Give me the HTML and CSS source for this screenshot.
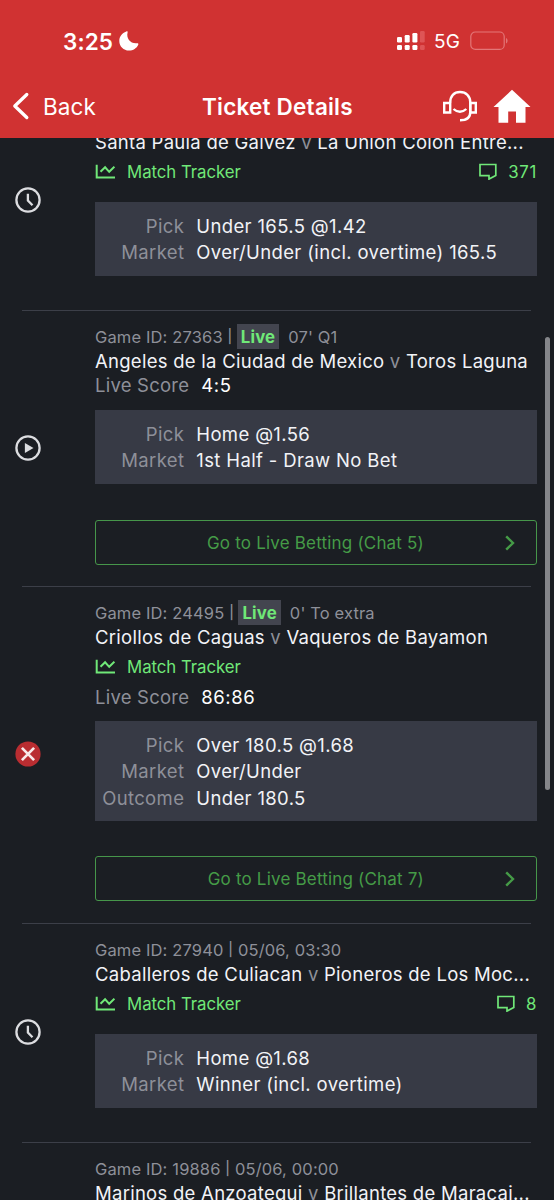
FILE: index.html
```html
<!DOCTYPE html>
<html lang="en">
<head>
<meta charset="utf-8">
<title>Ticket Details</title>
<link rel="stylesheet" href="styles.css">
</head>
<body>
<svg width="0" height="0" class="defs">
  <symbol id="clock" viewBox="0 0 26 26"><circle cx="13" cy="13" r="11.6" fill="none" stroke="#dcdde0" stroke-width="2.3"/><path d="M12.9 6.700v6.800l4.600 4.800" fill="none" stroke="#dcdde0" stroke-width="2.3"/></symbol>
  <symbol id="play" viewBox="0 0 26 26"><circle cx="13" cy="13" r="11.6" fill="none" stroke="#dcdde0" stroke-width="2.3"/><path d="M9.9 7.9v10.200l8.600-5.100z" fill="#dcdde0"/></symbol>
  <symbol id="lost" viewBox="0 0 26 26"><circle cx="13" cy="13" r="12.6" fill="#b92d31"/><path d="M6.900 6.900l12.200 12.200M19.100 6.900L6.900 19.100" fill="none" stroke="#f8eaea" stroke-width="2.7"/></symbol>
  <symbol id="chart" viewBox="0 0 20 16"><path d="M1.700 .8v12.700h18.300M5.500 7.800L10.100 3.300l4.100 4.500L19.400 2.700" fill="none" stroke="currentColor" stroke-width="2"/></symbol>
  <symbol id="chat" viewBox="0 0 18 17"><path d="M1 1.500h15.800v11l-6.800 3.600v-3.400H1z" fill="none" stroke="currentColor" stroke-width="1.7"/></symbol>
  <symbol id="next" viewBox="0 0 10 16"><path d="M1.2 1.3L8 8l-6.800 6.700" fill="none" stroke="currentColor" stroke-width="2.4"/></symbol>
</svg>
<header class="header">
  <div class="statusbar">
    <span class="time">3:25</span>
    <svg class="moon" width="20" height="20" viewBox="0 0 20 20"><path d="M7.300 .5C8.200 0 8.900.5 8.600 1.500 7 7.500 11.500 13 18.200 12.200c1-.1 1.500.5 1 1.500C17.700 17.200 14.200 19.500 10 19.500 4.600 19.500.3 15.300.3 9.900.3 5.600 3 2 7.300.5z" fill="#fff"/></svg>
    <svg class="signal" width="28" height="20" viewBox="0 0 28 20"><g fill="#fff"><rect x="0" y="6" width="5" height="5.5" rx="1.2"/><rect x="7.7" y="4" width="5" height="7.5" rx="1.2"/><rect x="15.4" y="2" width="5" height="9.5" rx="1.2"/><rect x="0" y="14" width="5" height="5" rx="1.2"/><rect x="7.7" y="14" width="5" height="5" rx="1.2"/><rect x="15.4" y="14" width="5" height="5" rx="1.2"/></g><g fill="#de5556"><rect x="23" y="0" width="4.7" height="11.5" rx="1.2"/><rect x="23" y="14" width="4.7" height="5" rx="1.2"/></g></svg>
    <span class="net">5G</span>
    <svg class="battery" width="40" height="20" viewBox="0 0 40 20"><rect x=".8" y="1" width="33.4" height="17.4" rx="4.5" fill="none" stroke="#e37677" stroke-width="1.2"/><path d="M36.200 7v5.500c1.700-.8 1.700-4.700 0-5.500z" fill="#e58485"/></svg>
  </div>
  <nav class="navbar">
    <svg class="back-icon" width="18" height="28" viewBox="0 0 18 28"><path d="M14.8 2.500L2.800 14l12 11.500" fill="none" stroke="#fff" stroke-width="3.3" stroke-linecap="round" stroke-linejoin="round"/></svg>
    <span class="back">Back</span>
    <h1 class="heading">Ticket Details</h1>
    <svg class="support" width="36" height="34" viewBox="0 0 36 34"><g fill="none" stroke="#fff" stroke-width="2.4"><path d="M8.200 13.500C8.200 7 12 3 18 3s10.300 4 10.300 10.500v9.500c0 5.500-3 8.300-10.300 8.300"/><path d="M2.200 14h6v9.500h-6zM28.300 14h5.500v9.500h-5.500z"/><path d="M11.500 20c3.800 3.600 9 3.600 12.800 0"/></g></svg>
    <svg class="home" width="38" height="34" viewBox="0 0 38 34"><path d="M19 .8L37.500 18H32.500V33.700H23V22.500H15.200V33.700H5.500V18H.5z" fill="#fff"/></svg>
  </nav>
</header>
<main class="list">
  <article class="bet bet-first">
    <svg class="state"><use href="#clock"/></svg>
    <div class="content">
      <h2 class="teams">Santa Paula de Galvez <i>v</i> La Union Colon Entre...</h2>
      <div class="tracker"><svg class="chart"><use href="#chart"/></svg><span class="label">Match Tracker</span><svg class="chat"><use href="#chat"/></svg><span class="count">371</span></div>
      <dl class="box"><dt>Pick</dt><dd>Under 165.5 @1.42</dd><dt>Market</dt><dd>Over/Under (incl. overtime) 165.5</dd></dl>
    </div>
  </article>
  <article class="bet">
    <svg class="state"><use href="#play"/></svg>
    <div class="content">
      <div class="meta">Game ID: 27363 <span class="bar">|</span><b class="live">Live</b><span>07' Q1</span></div>
      <h2 class="teams">Angeles de la Ciudad de Mexico <i>v</i> Toros Laguna</h2>
      <div class="score">Live Score<b>4:5</b></div>
      <dl class="box box-low"><dt>Pick</dt><dd>Home @1.56</dd><dt>Market</dt><dd>1st Half - Draw No Bet</dd></dl>
      <a class="go"><span>Go to Live Betting (Chat 5)</span><svg class="next"><use href="#next"/></svg></a>
    </div>
  </article>
  <article class="bet bet-long">
    <svg class="state"><use href="#lost"/></svg>
    <div class="content">
      <div class="meta">Game ID: 24495 <span class="bar">|</span><b class="live">Live</b><span>0' To extra</span></div>
      <h2 class="teams">Criollos de Caguas <i>v</i> Vaqueros de Bayamon</h2>
      <div class="tracker"><svg class="chart"><use href="#chart"/></svg><span class="label">Match Tracker</span></div>
      <div class="score">Live Score<b>86:86</b></div>
      <dl class="box"><dt>Pick</dt><dd>Over 180.5 @1.68</dd><dt>Market</dt><dd>Over/Under</dd><dt>Outcome</dt><dd>Under 180.5</dd></dl>
      <a class="go"><span>Go to Live Betting (Chat 7)</span><svg class="next"><use href="#next"/></svg></a>
    </div>
  </article>
  <article class="bet bet-plain">
    <svg class="state"><use href="#clock"/></svg>
    <div class="content">
      <div class="meta">Game ID: 27940 <span class="bar">|</span> 05/06, 03:30</div>
      <h2 class="teams">Caballeros de Culiacan <i>v</i> Pioneros de Los Moc...</h2>
      <div class="tracker"><svg class="chart"><use href="#chart"/></svg><span class="label">Match Tracker</span><svg class="chat"><use href="#chat"/></svg><span class="count">8</span></div>
      <dl class="box"><dt>Pick</dt><dd>Home @1.68</dd><dt>Market</dt><dd>Winner (incl. overtime)</dd></dl>
    </div>
  </article>
  <article class="bet bet-last">
    <div class="content">
      <div class="meta">Game ID: 19886 <span class="bar">|</span> 05/06, 00:00</div>
      <h2 class="teams">Marinos de Anzoategui <i>v</i> Brillantes de Maracai...</h2>
    </div>
  </article>
</main>
<div class="scrollbar"></div>
</body>
</html>
```
FILE: styles.css
```css
* { box-sizing: border-box; }
body { margin: 0; height: 1200px; overflow: hidden; background: #1b1e23; color: #f2f3f7; font-family: Inter, sans-serif; font-size: 18px; position: relative; }
.defs { position: absolute; }
svg { display: block; flex: none; }
.header { height: 138px; background: #d03232; color: #fff; padding-top: 25px; }
.statusbar { height: 32px; display: flex; align-items: center; padding-left: 63px; }
.time { width: 56px; font-size: 22.5px; font-weight: 600; letter-spacing: .1px; }
.signal { margin: 0 9px 0 258px; }
.net { width: 36px; font-size: 19px; letter-spacing: .2px; }
.navbar { height: 60px; margin-top: 19px; display: flex; align-items: center; padding-left: 12px; }
.back { width: 159px; margin-left: 13px; font-size: 22.5px; letter-spacing: .1px; }
.heading { width: 240px; margin: 0; font-size: 22.5px; font-weight: 600; letter-spacing: .22px; white-space: nowrap; }
.home { margin-left: 15px; }
.list { height: 1062px; overflow: hidden; }
.bet { display: flex; align-items: center; height: 276px; padding-left: 15px; position: relative; }
.bet::before { content: ""; position: absolute; left: 22px; right: 23px; top: 0; height: 1px; background: #3c3f48; }
.bet-first, .bet-plain { height: 219px; }
.bet-first { margin-top: -47px; }
.bet-first .content { padding-top: 39px; }
.bet-long { height: 337px; }
.bet-last { padding-left: 41px; }
.state { width: 26px; height: 26px; margin-top: -1px; }
.content { width: 442px; margin-left: 54px; align-self: flex-start; padding-top: 15px; }
.meta { height: 24px; line-height: 24px; font-size: 16.5px; color: #8e9099; display: flex; white-space: pre; letter-spacing: .14px; }
.bar { font-size: 13.5px; font-weight: 500; line-height: 23px; }
.live { height: 25px; margin: -1px 9px 0 4.5px; padding: 0 4px; background: #43454f; color: #70e878; font-size: 16.8px; line-height: 26px; }
.teams { margin: 0; height: 24px; line-height: 25px; font-size: 18.5px; font-weight: 400; letter-spacing: .27px; white-space: nowrap; }
.teams i { font-style: normal; color: #8e9099; }
.tracker { height: 36px; display: flex; align-items: center; color: #70e878; font-size: 16.8px; }
.chart { width: 20px; height: 16px; margin-right: 12px; }
.label { margin-right: auto; letter-spacing: -.03px; }
.chat { width: 18px; height: 17px; margin: -1px 11px 0 0; }
.count { letter-spacing: .7px; }
.score { height: 24px; line-height: 24px; font-size: 18.5px; letter-spacing: .23px; color: #8e9099; }
.score b { color: #fff; font-weight: 400; letter-spacing: .6px; margin-left: 12px; }
.box { margin: 12px 0 0; padding: 11px 0 0; height: 74px; background: #373a45; display: grid; grid-template-columns: 89.3px 1fr; column-gap: 12px; grid-auto-rows: 26.3px; line-height: 27px; white-space: nowrap; font-size: 18.5px; letter-spacing: .36px; }
.bet-long .box { height: 100px; }
.box-low { margin-top: 13px; }
.box dt { text-align: right; color: #8e9099; }
.box dd { margin: 0; }
.go { margin-top: 36px; height: 45px; border: 1px solid #46964a; border-radius: 3px; color: #459b47; display: flex; align-items: center; justify-content: flex-end; font-size: 17px; letter-spacing: .19px; }
.bet-long .go { margin-top: 35px; }
.next { width: 10px; height: 16px; margin: 0 21px 0 81px; }
.scrollbar { position: absolute; left: 545px; top: 337px; width: 5px; height: 453px; border-radius: 3px; background: #85868a; }
```
